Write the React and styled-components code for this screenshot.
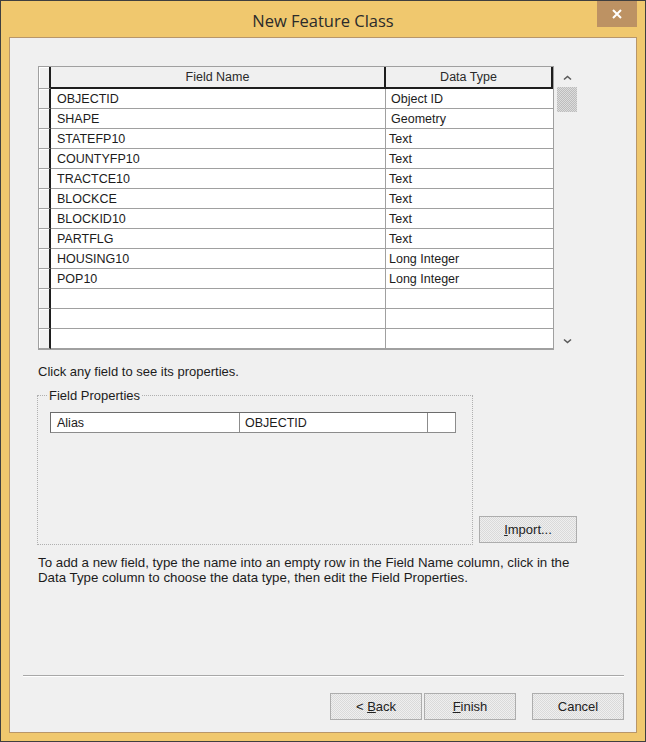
import React from "react";
import styled, { createGlobalStyle } from "styled-components";

const GlobalStyle = createGlobalStyle`
  html, body {
    margin: 0;
    padding: 0;
    background: #ffffff;
  }
  body {
    font-family: "Liberation Sans", Arial, sans-serif;
  }
`;

const fields = [
  { name: "OBJECTID", type: "Object ID", locked: true },
  { name: "SHAPE", type: "Geometry", locked: true },
  { name: "STATEFP10", type: "Text" },
  { name: "COUNTYFP10", type: "Text" },
  { name: "TRACTCE10", type: "Text" },
  { name: "BLOCKCE", type: "Text" },
  { name: "BLOCKID10", type: "Text" },
  { name: "PARTFLG", type: "Text" },
  { name: "HOUSING10", type: "Long Integer" },
  { name: "POP10", type: "Long Integer" },
  { name: "", type: "" },
  { name: "", type: "" },
  { name: "", type: "" },
];

const dither = `repeating-conic-gradient(#dadada 0 25%, #efefef 0 50%) 0 0 / 2px 2px`;

const Window = styled.div`
  width: 646px;
  height: 742px;
  box-sizing: border-box;
  border: 1px solid #3f3f3f;
  background: #f0c86e;
  padding: 0 8px 8px 8px;
  display: flex;
  flex-direction: column;
`;

const TitleBar = styled.div`
  height: 36px;
  display: grid;
  grid-template-columns: 40px 1fr 40px;
  align-items: start;
`;

const Title = styled.div`
  grid-column: 2;
  text-align: center;
  padding-top: 10px;
  line-height: 20px;
  font-family: "Open Sans", "Noto Sans", sans-serif;
  font-size: 16.5px;
  color: #2b2b2b;
`;

const CloseButton = styled.div`
  grid-column: 3;
  height: 26px;
  background: #bd9263;
  display: flex;
  align-items: center;
  justify-content: center;
`;

const Client = styled.div`
  flex: 1;
  border: 1px solid #b8966a;
  background: #f0f0f0;
  display: flex;
  flex-direction: column;
  font-size: 13px;
  color: #1c1c1c;
`;

const Body = styled.div`
  flex: 1;
  padding: 28px 0 0 28px;
  display: flex;
  flex-direction: column;
`;

const GridArea = styled.div`
  display: flex;
  gap: 3px;
`;

const Table = styled.div`
  width: 516px;
  box-sizing: border-box;
  border: 1px solid #a0a0a0;
  background: #ffffff;
  display: grid;
  grid-template-columns: 12px 335px 1fr;
  font-size: 12.5px;
`;

const RowHead = styled.div`
  box-sizing: border-box;
  height: ${(p) => (p.header ? 22 : 20)}px;
  background: #f0f0f0;
  border-right: 2px solid #1e1e1e;
  border-bottom: 1px solid #a0a0a0;
  box-shadow: inset 1px 1px 0 #ffffff;
`;

const HeadCell = styled.div`
  box-sizing: border-box;
  height: 22px;
  background: #f0f0f0;
  border-right: 2px solid #1e1e1e;
  border-bottom: 2px solid #1e1e1e;
  display: flex;
  align-items: center;
  justify-content: center;
  color: #2a2a2a;
`;

const Cell = styled.div`
  box-sizing: border-box;
  height: 20px;
  border-bottom: 1px solid #a0a0a0;
  border-right: ${(p) => (p.last ? "none" : "1px solid #a0a0a0")};
  padding-left: ${(p) => p.indent}px;
  display: flex;
  align-items: center;
  white-space: nowrap;
`;

const ScrollBar = styled.div`
  width: 20px;
  display: flex;
  flex-direction: column;
`;

const ScrollArrow = styled.div`
  height: 19px;
  display: flex;
  align-items: center;
  justify-content: center;
  margin-top: ${(p) => (p.down ? "auto" : "0")};
  padding-top: ${(p) => (p.down ? "0" : "2px")};
`;

const Thumb = styled.div`
  height: 25px;
  background: repeating-conic-gradient(#bdbdbd 0 25%, #dcdcdc 0 50%) 0 0 / 2px 2px;
`;

const Hint = styled.div`
  margin-top: 14px;
  line-height: 15px;
`;

const PropsRow = styled.div`
  display: flex;
  align-items: flex-end;
  gap: 6px;
  margin-top: 9px;
  margin-left: -1px;
`;

const GroupBox = styled.fieldset`
  margin: 0;
  width: 436px;
  height: 157px;
  box-sizing: border-box;
  border: 1px dotted #b0b0b0;
  padding: 9px 0 0 12px;
  min-width: 0;
`;

const Legend = styled.legend`
  margin-left: -3px;
  padding: 0 2px;
  line-height: 15px;
  font-size: 13px;
  color: #1c1c1c;
`;

const AliasRow = styled.div`
  width: 406px;
  height: 21px;
  box-sizing: border-box;
  border: 1px solid #8c8c8c;
  border-top-color: #6c6c6c;
  border-left-color: #6c6c6c;
  background: #ffffff;
  display: grid;
  grid-template-columns: 189px 188px 1fr;
  font-size: 12.5px;
`;

const AliasCell = styled.div`
  border-right: ${(p) => (p.last ? "none" : "1px solid #8c8c8c")};
  padding-left: ${(p) => p.indent}px;
  display: flex;
  align-items: center;
`;

const DialogButton = styled.div`
  width: ${(p) => p.width}px;
  height: 27px;
  box-sizing: border-box;
  border: 1px solid #adadad;
  background: ${dither};
  display: flex;
  align-items: center;
  justify-content: center;
  font-size: 13px;
  color: #222222;
  margin-bottom: ${(p) => p.drop || 0}px;
`;

const Note = styled.div`
  margin-top: 10px;
  line-height: 15px;
  font-size: 13.3px;
`;

const Footer = styled.div`
  padding: 0 12px 12px 13px;
  display: flex;
  flex-direction: column;
`;

const Separator = styled.div`
  height: 1px;
  background: #a8a8a8;
  border-bottom: 1px solid #ffffff;
`;

const ButtonRow = styled.div`
  margin-top: 16px;
  display: flex;
  justify-content: flex-end;
  gap: 2px;
`;

const Spacer = styled.div`
  width: 12px;
`;

function Chevron({ down }) {
  return (
    <svg width="9" height="6" viewBox="0 0 9 6">
      <path
        d={down ? "M1 1.5 L4.5 4.5 L8 1.5" : "M1 4.5 L4.5 1.5 L8 4.5"}
        fill="none"
        stroke="#5a5a5a"
        strokeWidth="1.6"
      />
    </svg>
  );
}

export default function App() {
  return (
    <>
      <GlobalStyle />
      <Window>
        <TitleBar>
          <Title>New Feature Class</Title>
          <CloseButton>
            <svg width="10" height="10" viewBox="0 0 10 10">
              <path d="M1 1 L9 9 M9 1 L1 9" stroke="#ffffff" strokeWidth="2" />
            </svg>
          </CloseButton>
        </TitleBar>
        <Client>
          <Body>
            <GridArea>
              <Table>
                <RowHead header />
                <HeadCell>Field Name</HeadCell>
                <HeadCell>Data Type</HeadCell>
                {fields.map((f, i) => (
                  <React.Fragment key={i}>
                    <RowHead />
                    <Cell indent={6}>{f.name}</Cell>
                    <Cell last indent={f.locked ? 5 : 3}>
                      {f.type}
                    </Cell>
                  </React.Fragment>
                ))}
              </Table>
              <ScrollBar>
                <ScrollArrow>
                  <Chevron />
                </ScrollArrow>
                <Thumb />
                <ScrollArrow down>
                  <Chevron down />
                </ScrollArrow>
              </ScrollBar>
            </GridArea>
            <Hint>Click any field to see its properties.</Hint>
            <PropsRow>
              <GroupBox>
                <Legend>Field Properties</Legend>
                <AliasRow>
                  <AliasCell indent={6}>Alias</AliasCell>
                  <AliasCell indent={5}>OBJECTID</AliasCell>
                  <AliasCell last />
                </AliasRow>
              </GroupBox>
              <DialogButton width={98} drop={2}>
                <span>
                  <u>I</u>mport...
                </span>
              </DialogButton>
            </PropsRow>
            <Note>
              To add a new field, type the name into an empty row in the Field Name column, click in the
              <br />
              Data Type column to choose the data type, then edit the Field Properties.
            </Note>
          </Body>
          <Footer>
            <Separator />
            <ButtonRow>
              <DialogButton width={92}>
                <span>
                  {"< "}
                  <u>B</u>ack
                </span>
              </DialogButton>
              <DialogButton width={92}>
                <span>
                  <u>F</u>inish
                </span>
              </DialogButton>
              <Spacer />
              <DialogButton width={92}>Cancel</DialogButton>
            </ButtonRow>
          </Footer>
        </Client>
      </Window>
    </>
  );
}
